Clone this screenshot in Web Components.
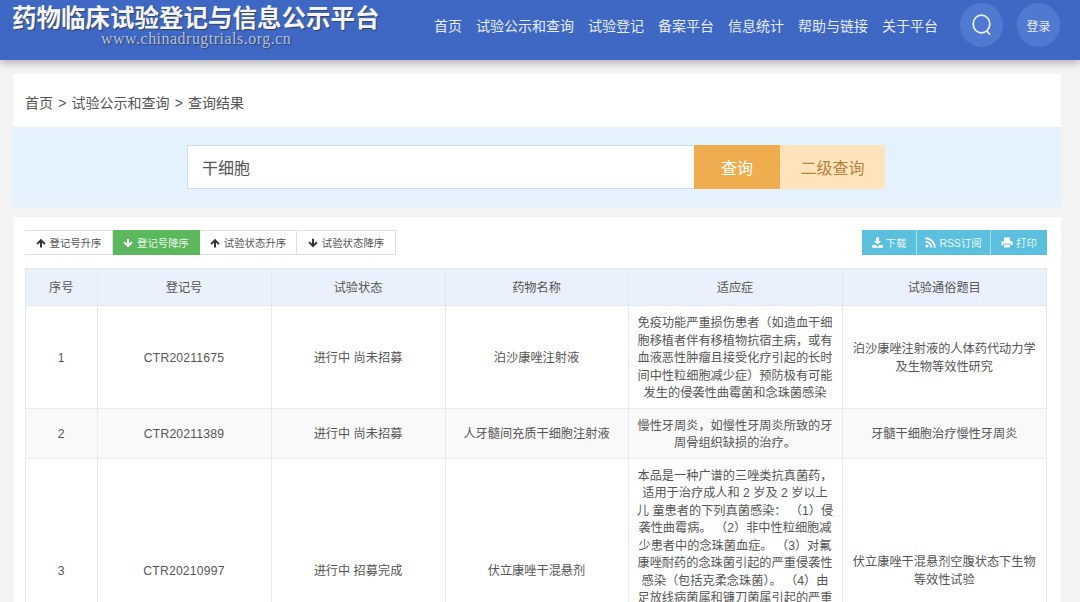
<!DOCTYPE html>
<html lang="zh">
<head>
<meta charset="utf-8">
<title>查询结果</title>
<style>
  html, body { margin: 0; height: 602px; overflow: hidden; }
  body {
    background: #f3f3f3;
    color: #555;
    font-family: "Liberation Sans", "Noto Sans CJK SC", sans-serif;
  }
</style>
</head>
<body>
<site-header></site-header>
<page-main>
  <bread-crumb>首页 &gt; 试验公示和查询 &gt; 查询结果</bread-crumb>
  <search-band value="干细胞"></search-band>
  <result-card>
    <sort-bar slot="left"></sort-bar>
    <tool-bar slot="right"></tool-bar>
    <trial-table></trial-table>
  </result-card>
</page-main>

<script>
// iconos
const icons = {
  up: '<svg width="10" height="10" viewBox="0 0 10 10"><path d="M5 .8 9.6 5.4 8.2 6.7 6 4.5V9.4H4V4.5L1.8 6.7.4 5.4z" fill="currentColor"/></svg>',
  down: '<svg width="10" height="10" viewBox="0 0 10 10"><path d="M5 9.4.4 4.8 1.8 3.5 4 5.7V.8H6V5.7L8.2 3.5 9.6 4.8z" fill="currentColor"/></svg>',
  download: '<svg width="11" height="11" viewBox="0 0 11 11"><path d="M4 .5H7V4H9.2L5.5 7.6 1.8 4H4zM0 8H3.2L5.5 9.6 7.8 8H11V10.8H0z" fill="currentColor"/></svg>',
  rss: '<svg width="11" height="11" viewBox="0 0 11 11"><circle cx="2" cy="9" r="1.6" fill="currentColor"/><path d="M.5 4.6A5.9 5.9 0 0 1 6.4 10.5M.5 1.2A9.3 9.3 0 0 1 9.8 10.5" fill="none" stroke="currentColor" stroke-width="1.9"/></svg>',
  print: '<svg width="12" height="11" viewBox="0 0 12 11"><path d="M3 .5H9V4H3zM1.5 4H10.5A1 1 0 0 1 11.5 5V8.2H9.6V6.6H2.4V8.2H.5V5A1 1 0 0 1 1.5 4ZM3.2 7.4H8.8V10.5H3.2z" fill="currentColor"/></svg>'
}

class SiteHeader extends HTMLElement {
  constructor() {
    super()
    this.attachShadow({ mode: "open" })
    const links = ["首页", "试验公示和查询", "试验登记", "备案平台", "信息统计", "帮助与链接", "关于平台"]
    this.shadowRoot.innerHTML = `
    <style>
      :host {
        display: flex;
        align-items: flex-start;
        height: 60px;
        background: #3f68c4;
        box-shadow: 0 3px 8px rgba(0,0,0,.28);
        position: relative;
        color: #fff;
      }
      .logo { margin-left: 12px; width: 380px; }
      h1 {
        margin: 2px 0 0;
        font-size: 24.5px;
        line-height: 34px;
        font-weight: bold;
        white-space: nowrap;
        color: #f4f5f8;
        text-shadow: 1px 1px 1px #33415f;
      }
      .url {
        margin: -5px 0 0 89px;
        font: 16px/16px "Liberation Serif", serif;
        letter-spacing: .48px;
        color: #b4bfd8;
        text-shadow: 1px 1px 1px #2f3f66;
        white-space: nowrap;
      }
      nav {
        display: flex;
        gap: 14px;
        margin-left: 42px;
        padding-top: 16px;
        font-size: 14px;
        line-height: 20px;
        white-space: nowrap;
        color: #e6ebf7;
      }
      .round {
        display: flex;
        align-items: center;
        justify-content: center;
        width: 43px;
        height: 44px;
        margin-top: 3px;
        border-radius: 50%;
        background: #5079d2;
        font-size: 12px;
        color: #e6ebf7;
      }
      .search { margin-left: 22px; }
      .login { margin-left: 14px; }
    </style>
    <div class="logo">
      <h1>药物临床试验登记与信息公示平台</h1>
      <div class="url">www.chinadrugtrials.org.cn</div>
    </div>
    <nav>${links.map(l => `<span>${l}</span>`).join("")}</nav>
    <div class="round search">
      <svg width="24" height="24" viewBox="0 0 24 24" fill="none" stroke="#eef1f9" stroke-width="1.7">
        <ellipse cx="11.5" cy="11" rx="8.3" ry="8.8"/><path d="M16.8 18 20 21.8"/>
      </svg>
    </div>
    <div class="round login">登录</div>
    `
  }
}

class PageMain extends HTMLElement {
  constructor() {
    super()
    this.attachShadow({ mode: "open" })
    this.shadowRoot.innerHTML = `
    <style>
      :host { display: block; width: 1048px; margin: 14px 0 0 13px; }
    </style>
    <slot></slot>
    `
  }
}

class BreadCrumb extends HTMLElement {
  constructor() {
    super()
    this.attachShadow({ mode: "open" })
    this.shadowRoot.innerHTML = `
    <style>
      :host {
        display: block;
        height: 53px;
        box-sizing: border-box;
        padding: 19px 12px 0;
        background: #fff;
        font-size: 14px;
        line-height: 20px;
        word-spacing: 1.3px;
        color: #555;
      }
    </style>
    <slot></slot>
    `
  }
}

class SearchBand extends HTMLElement {
  constructor() {
    super()
    this.attachShadow({ mode: "open" })
    this.shadowRoot.innerHTML = `
    <style>
      :host {
        display: flex;
        justify-content: center;
        align-items: flex-start;
        box-sizing: border-box;
        height: 80px;
        padding: 18px 2px 0 0;
        background: #e3f2fd;
      }
      .box { display: flex; height: 44px; width: 698px; }
      .value {
        box-sizing: border-box;
        width: 507px;
        padding-left: 14px;
        background: #fff;
        border: 1px solid #d3dbe6;
        border-right: 0;
        font-size: 16px;
        line-height: 46px;
        color: #555;
      }
      .btn { text-align: center; font-size: 16px; line-height: 47px; }
      .go { width: 86px; background: #f0ad4e; color: #fff; }
      .adv { width: 105px; background: #fee3bb; color: #b5853f; }
    </style>
    <div class="box">
      <div class="value"></div>
      <div class="btn go">查询</div>
      <div class="btn adv">二级查询</div>
    </div>
    `
    this.shadowRoot.querySelector(".value").textContent = this.getAttribute("value") ?? ""
  }
}

class ResultCard extends HTMLElement {
  constructor() {
    super()
    this.attachShadow({ mode: "open" })
    this.shadowRoot.innerHTML = `
    <style>
      :host {
        display: block;
        margin-top: 10px;
        padding: 13px 14px 0 12px;
        background: #fff;
      }
      .bars { display: flex; justify-content: space-between; margin-bottom: 13px; }
    </style>
    <div class="bars"><slot name="left"></slot><slot name="right"></slot></div>
    <slot></slot>
    `
  }
}

class SortBar extends HTMLElement {
  constructor() {
    super()
    this.attachShadow({ mode: "open" })
    const items = [
      ["up", "登记号升序", 88],
      ["down", "登记号降序", 87, true],
      ["up", "试验状态升序", 97],
      ["down", "试验状态降序", 99]
    ]
    this.shadowRoot.innerHTML = `
    <style>
      :host { display: flex; height: 25px; font-size: 10.4px; }
      div {
        box-sizing: border-box;
        display: flex;
        align-items: center;
        justify-content: center;
        gap: 4px;
        border: 1px solid #e0e0e0;
        border-left-width: 0;
        color: #555;
        white-space: nowrap;
      }
      div:first-child { border-left-width: 1px; }
      svg { color: #333; }
      .on { background: #5cb85c; border-color: #5cb85c; color: #e4f3e4; }
      .on svg { color: #fff; }
    </style>
    ${items.map(([icon, text, w, on]) => `<div class="${on ? "on" : ""}" style="width:${w}px">${icons[icon]}${text}</div>`).join("")}
    `
  }
}

class ToolBar extends HTMLElement {
  constructor() {
    super()
    this.attachShadow({ mode: "open" })
    const items = [["download", "下载", 55], ["rss", "RSS订阅", 74], ["print", "打印", 56]]
    this.shadowRoot.innerHTML = `
    <style>
      :host { display: flex; height: 25px; font-size: 10.4px; }
      div {
        box-sizing: border-box;
        display: flex;
        align-items: center;
        justify-content: center;
        gap: 3px;
        background: #5bc0de;
        color: #eaf7fb;
        border-right: 1px solid #a6dfee;
        white-space: nowrap;
      }
      div:last-child { border-right: 0; }
      svg { color: #fff; }
    </style>
    ${items.map(([icon, text, w]) => `<div style="width:${w}px">${icons[icon]}${text}</div>`).join("")}
    `
  }
}

const rows = [
  ["1", "CTR20211675", "进行中 尚未招募", "泊沙康唑注射液",
    "免疫功能严重损伤患者（如造血干细<br>胞移植者伴有移植物抗宿主病，或有<br>血液恶性肿瘤且接受化疗引起的长时<br>间中性粒细胞减少症）预防极有可能<br>发生的侵袭性曲霉菌和念珠菌感染",
    "泊沙康唑注射液的人体药代动力学<br>及生物等效性研究"],
  ["2", "CTR20211389", "进行中 尚未招募", "人牙髓间充质干细胞注射液",
    "慢性牙周炎，如慢性牙周炎所致的牙<br>周骨组织缺损的治疗。",
    "牙髓干细胞治疗慢性牙周炎"],
  ["3", "CTR20210997", "进行中 招募完成", "伏立康唑干混悬剂",
    "本品是一种广谱的三唑类抗真菌药，<br>适用于治疗成人和 2 岁及 2 岁以上<br>儿 童患者的下列真菌感染： （1）侵<br>袭性曲霉病。 （2）非中性粒细胞减<br>少患者中的念珠菌血症。 （3）对氟<br>康唑耐药的念珠菌引起的严重侵袭性<br>感染（包括克柔念珠菌）。 （4）由<br>足放线病菌属和镰刀菌属引起的严重",
    "伏立康唑干混悬剂空腹状态下生物<br>等效性试验"]
]

class TrialTable extends HTMLElement {
  constructor() {
    super()
    this.attachShadow({ mode: "open" })
    const heads = ["序号", "登记号", "试验状态", "药物名称", "适应症", "试验通俗题目"]
    const widths = [71.5, 174, 174, 183, 214, 204.5]
    this.shadowRoot.innerHTML = `
    <style>
      :host { display: block; font-size: 12.2px; line-height: 17.5px; color: #555; }
      table { border-collapse: collapse; table-layout: fixed; width: 1021px; }
      th, td {
        border: 1px solid #e8eaee;
        padding: 9px 8px 5px;
        text-align: center;
        vertical-align: middle;
        white-space: nowrap;
      }
      th { height: 22px; background: #eaf1fd; font-weight: normal; color: #555; border-color: #e2e8f2; }
      tr:nth-child(even) td { background: #f9f9f9; }
      .tall td { height: 208px; }
      .tall td.top { vertical-align: top; }
      td.code { letter-spacing: .18px; }
    </style>
    <table>
      <colgroup>${widths.map(w => `<col style="width:${w}px">`).join("")}</colgroup>
      <thead><tr>${heads.map(h => `<th>${h}</th>`).join("")}</tr></thead>
      <tbody>
        ${rows.map((r, i) => `<tr class="${i === 2 ? "tall" : ""}">${r.map((c, j) => `<td class="${j === 4 ? "top" : j === 1 ? "code" : ""}">${c}</td>`).join("")}</tr>`).join("")}
      </tbody>
    </table>
    `
  }
}

window.customElements.define("site-header", SiteHeader)
window.customElements.define("page-main", PageMain)
window.customElements.define("bread-crumb", BreadCrumb)
window.customElements.define("search-band", SearchBand)
window.customElements.define("result-card", ResultCard)
window.customElements.define("sort-bar", SortBar)
window.customElements.define("tool-bar", ToolBar)
window.customElements.define("trial-table", TrialTable)
</script>
</body>
</html>
